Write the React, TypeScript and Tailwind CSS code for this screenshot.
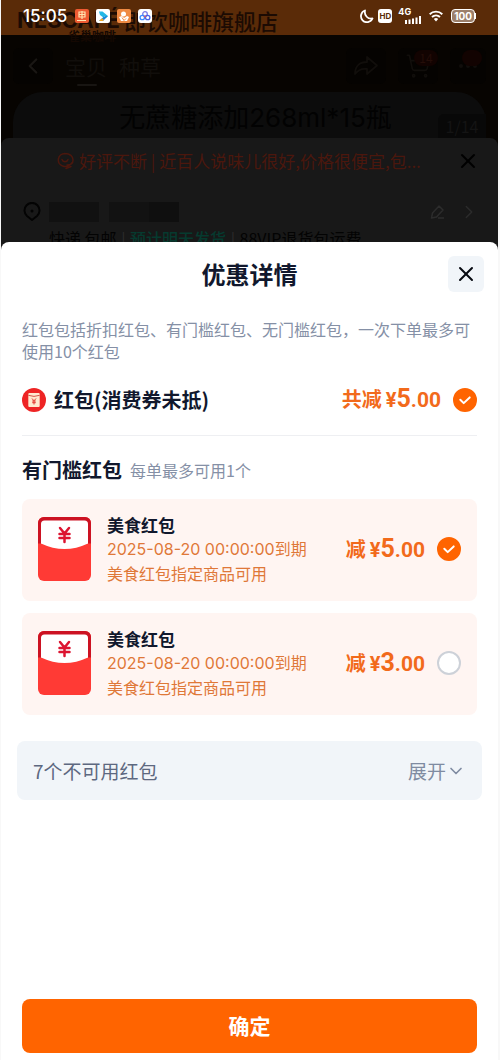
import { useState } from 'react'
import { ChevronDown, ChevronLeft, ChevronRight, Ellipsis, ShoppingCart, X } from 'lucide-react'

type Coupon = {
  id: string
  title: string
  expires: string
  scope: string
  amount: number
}

const coupons: Coupon[] = [
  { id: 'food-5', title: '美食红包', expires: '2025-08-20 00:00:00', scope: '美食红包指定商品可用', amount: 5 },
  { id: 'food-3', title: '美食红包', expires: '2025-08-20 00:00:00', scope: '美食红包指定商品可用', amount: 3 }
]

export default function App() {
  const [selected, setSelected] = useState('food-5')
  const [applied, setApplied] = useState(true)

  const total = coupons.find(c => c.id === selected)?.amount ?? 0

  return (
    <div className="min-h-screen flex flex-col bg-[#f8f8f8] pl-px pr-0.5 font-['Noto_Sans_CJK_SC',sans-serif]">
      <div className="flex-1 flex flex-col bg-[#181818]">
        <ShopPage />

        {/* Coupon sheet */}
        <main className="flex-1 flex flex-col bg-white rounded-t-lg">
          <header className="grid grid-cols-[1fr_auto_1fr] items-center px-3.5 pt-3.5">
            <h1 className="col-start-2 text-[24px] leading-9 font-bold text-[#11182d]">优惠详情</h1>
            <button aria-label="关闭" className="justify-self-end w-9 h-9 rounded-md bg-[#f1f5f9] flex items-center justify-center text-[#080b12]">
              <X size={24} strokeWidth={2} />
            </button>
          </header>

          <p className="px-[21px] pt-[26px] text-[16px] leading-[22px] text-[#8590a6]">
            红包包括折扣红包、有门槛红包、无门槛红包，一次下单最多可使用10个红包
          </p>

          <label className="mx-[21px] pt-[21px] pb-[19px] flex items-center border-b border-[#eeeff2]">
            <BadgeIcon />
            <span className="ml-2 text-[20px] leading-8 font-bold text-[#11182d]">红包(消费券未抵)</span>
            <Price prefix="共减" amount={total} />
            <Tick type="checkbox" checked={applied} onChange={() => setApplied(!applied)} />
          </label>

          <div className="px-[21px] pt-[19px] flex items-center gap-2">
            <h2 className="text-[20px] leading-[30px] font-bold text-[#11182d]">有门槛红包</h2>
            <span className="text-[16px] leading-6 text-[#8590a6]">每单最多可用1个</span>
          </div>

          <div className="px-[21px] pt-3.5 space-y-3">
            {coupons.map(coupon => (
              <label key={coupon.id} className="flex items-center rounded-lg bg-[#fff5f2] px-4 pt-3.5 pb-4">
                <EnvelopeIcon />
                <span className="ml-4 flex flex-col text-[16px] leading-6 text-[#df7838]">
                  <span className="text-[17px] font-bold text-[#11182d]">{coupon.title}</span>
                  <span className="font-['Inter','Noto_Sans_CJK_SC',sans-serif] whitespace-nowrap">{coupon.expires}到期</span>
                  <span>{coupon.scope}</span>
                </span>
                <Price prefix="减" amount={coupon.amount} />
                <Tick type="radio" checked={selected === coupon.id} onChange={() => setSelected(coupon.id)} />
              </label>
            ))}
          </div>

          <button className="mx-4 mt-[26px] px-4 pt-4 pb-[15px] rounded-lg bg-[#f1f5f9] flex items-center justify-between text-[19px] leading-7">
            <span className="text-[#5d6880]">7个不可用红包</span>
            <span className="flex items-center text-[#7f8ba1]">
              展开
              <ChevronDown size={20} strokeWidth={2} />
            </span>
          </button>

          <div className="mt-auto px-[21px] pb-[7px]">
            <button className="w-full rounded-lg bg-[#ff6400] pt-[10px] pb-3 text-[21px] leading-8 font-bold text-white">确定</button>
          </div>
        </main>
      </div>
    </div>
  )
}

function Price({ prefix, amount }: { prefix: string; amount: number }) {
  const [whole, cents] = amount.toFixed(2).split('.')
  return (
    <span className="ml-auto mr-3 flex items-baseline font-['Roboto','Noto_Sans_CJK_SC',sans-serif] font-bold text-[20px] leading-8 text-[#f26a1b] whitespace-nowrap">
      {prefix}
      <span className="ml-1">¥</span>
      <span className="text-[25px]">{whole}</span>
      <span className="text-[21px]">.{cents}</span>
    </span>
  )
}

function Tick({ type, checked, onChange }: { type: 'checkbox' | 'radio'; checked: boolean; onChange: () => void }) {
  return (
    <span className="relative w-6 h-6 shrink-0">
      <input
        type={type}
        name={type === 'radio' ? 'coupon' : 'apply'}
        checked={checked}
        onChange={onChange}
        className="block appearance-none w-6 h-6 rounded-full border-2 border-[#cdd1d8] bg-white checked:border-[#ff6400] checked:bg-[#ff6400]"
      />
      {checked && (
        <svg viewBox="0 0 24 24" className="absolute inset-0 pointer-events-none" fill="none" stroke="#fff" strokeWidth="2" strokeLinecap="round" strokeLinejoin="round">
          <path d="M7.3 11.8l3.4 3.3 6-5.7" />
        </svg>
      )}
    </span>
  )
}

function BadgeIcon() {
  return (
    <svg viewBox="0 0 24 24" className="w-6 h-6 shrink-0">
      <circle cx="12" cy="12" r="12" fill="#ee2424" />
      <rect x="6.3" y="5" width="11.4" height="14" rx="1" fill="#ffe9cf" />
      <path d="M6.3 7.3q5.7 2.2 11.4 0" fill="none" stroke="#d5554a" strokeWidth="1" />
      <path d="M10 10.5l2 2.3 2-2.3M12 12.8v3.7M10.2 13h3.6M10.2 14.7h3.6" fill="none" stroke="#e23b32" strokeWidth="1" />
    </svg>
  )
}

function EnvelopeIcon() {
  return (
    <svg viewBox="0 0 53 64" className="w-[53px] h-16 shrink-0">
      <rect width="53" height="64" rx="6" fill="#ff3a35" />
      <path d="M0 27V6a6 6 0 0 1 6-6h41a6 6 0 0 1 6 6v21z" fill="#cc1222" />
      <path d="M3 27V7a3.5 3.5 0 0 1 3.5-3.5h40A3.5 3.5 0 0 1 50 7v20z" fill="#fff" />
      <path d="M0 26.5h3q23.5 11 47 0h3v8H0z" fill="#ff3a35" />
      <path d="M3 26.5q23.5 11 47 0z" fill="#fff" />
      <path d="M22 11l4.5 5.5L31 11M26.5 16.5v8.5M21.5 17h10M21.5 21h10" fill="none" stroke="#dc1430" strokeWidth="2.5" strokeLinecap="round" />
    </svg>
  )
}

/* Dimmed shop page behind the sheet */
function ShopPage() {
  return (
    <div className="h-[242px] overflow-hidden bg-[#070401]">
      <div className="relative h-[35px] bg-[#5a2b08]">
        <div className="pl-4 flex items-center gap-1 text-[#1c0b03] whitespace-nowrap">
          <span className="font-['Inter',sans-serif] text-[22px] leading-10 font-bold">NESCAFÉ</span>
          <span className="text-[22px] leading-10 font-medium">即饮咖啡旗舰店</span>
        </div>
        <span className="absolute left-[67px] top-[30px] text-[12px] leading-3 font-bold text-[#140802]">雀巢咖啡</span>
        <StatusBar />
      </div>

      <nav className="h-[57px] px-3 pt-1 flex items-center gap-3 text-[#110e0b]">
        <button aria-label="返回" className="w-10 h-9 rounded-md bg-[#050301] flex items-center justify-center text-[#1a1714]">
          <ChevronLeft size={26} strokeWidth={2} />
        </button>
        <a href="#item" className="relative text-[21px] leading-8">
          宝贝
          <span className="absolute left-3 -bottom-1 w-5 h-0.5 rounded bg-[#181512]" />
        </a>
        <a href="#notes" className="text-[21px] leading-8">种草</a>
        <div className="ml-auto flex gap-3">
          <button aria-label="分享" className="w-10 h-9 rounded-md bg-[#050301] flex items-center justify-center">
            <svg viewBox="0 0 26 24" className="w-[26px] h-6" fill="none" stroke="currentColor" strokeWidth="1.8" strokeLinejoin="round">
              <path d="M14 3l10 8.5-10 8.500v-5C8 14 5 16 2 20c0-8 5-12 12-12z" />
            </svg>
          </button>
          <button aria-label="购物车" className="relative w-10 h-9 rounded-md bg-[#050301] flex items-center justify-center">
            <ShoppingCart size={26} strokeWidth={1.5} />
            <span className="absolute left-4 top-0.5 w-6 h-4 rounded-full bg-[#120301] text-[12px] leading-4 text-center text-[#240d08]">14</span>
          </button>
          <button aria-label="更多" className="relative w-9 h-9 rounded-md bg-[#050301] flex items-center justify-center">
            <Ellipsis size={24} />
            <span className="absolute left-3 top-0.5 w-5 h-4 rounded-full bg-[#120301]" />
          </button>
        </div>
      </nav>

      <div className="relative h-[46px] mx-3 pl-3 rounded-t-[30px] bg-[#0c0c0c] text-center text-[#020202]">
        <span className="font-['Inter','Noto_Sans_CJK_SC',sans-serif] text-[26px] leading-[52px]">无蔗糖添加268ml*15瓶</span>
        <span className="absolute right-0 bottom-0 w-12 rounded-tl-md bg-[#080808] text-[16px] leading-6 text-[#141414]">1/14</span>
      </div>

      <div className="rounded-t-lg bg-[#181818] pl-[22px] pr-[18px]">
        <div className="h-[46px] pl-[34px] flex items-center text-[17px] text-[#4b170d]">
          <svg viewBox="0 0 18 18" className="w-[18px] h-[18px] shrink-0 mr-1" fill="none" stroke="currentColor" strokeWidth="1.5" strokeLinecap="round">
            <path d="M8 1.5a7 6.5 0 1 0 6.5 9.5M8 1.5c5 0 8 3 8 6.5s-3 5-6 5M5 7.500c1 3 5 3 6 0M9 16.500l5-2" />
          </svg>
          <span className="flex-1 whitespace-nowrap">好评不断 | 近百人说味儿很好,价格很便宜,包...</span>
          <button aria-label="关闭评价" className="ml-6 text-black">
            <X size={24} strokeWidth={2} />
          </button>
        </div>
        <div className="mt-4 h-6 flex items-center text-[#030303]">
          <svg viewBox="0 0 18 20" className="w-[18px] h-5 shrink-0" fill="none" stroke="currentColor" strokeWidth="2" strokeLinejoin="round">
            <path d="M9 18l-5-4a7.5 7.5 0 1 1 10 0z" />
            <circle cx="9" cy="9" r="1.5" fill="currentColor" stroke="none" />
          </svg>
          <span className="ml-2 w-[50px] h-5 bg-[#111]" />
          <span className="ml-2.5 w-10 h-5 bg-[#121212]" />
          <span className="w-[30px] h-5 bg-[#0f0f0f]" />
          <svg viewBox="0 0 16 16" className="ml-auto w-4 h-4 text-[#2c2c2c]" fill="none" stroke="currentColor" strokeWidth="1.5" strokeLinejoin="round">
            <path d="M1.5 14l1-5L9 2l4 4-6.5 7-5 1zM8 14h6" />
          </svg>
          <ChevronRight className="ml-3 text-[#2c2c2c]" size={22} strokeWidth={1.5} />
        </div>
        <p className="pl-[26px] mt-0.5 text-[16px] leading-6 text-[#030303] whitespace-nowrap">
          快递 包邮<span className="mx-px text-[#2c2c2c]"> | </span>
          <span className="font-medium text-[#063a2f]">预计明天发货</span>
          <span className="mx-px text-[#2c2c2c]"> | </span>88VIP退货包运费
        </p>
      </div>
    </div>
  )
}

function StatusBar() {
  return (
    <div className="absolute inset-x-0 top-0 h-8 pl-[22px] pr-[22px] flex items-center text-white font-['Inter',sans-serif]">
      <span className="text-[17px] leading-6 font-medium">15:05</span>
      <div className="ml-2 flex gap-[7px]">
        <svg viewBox="0 0 14 14" className="w-3.5 h-3.5">
          <rect width="14" height="14" rx="2" fill="#ee5a32" />
          <path d="M4 3h6v5H4zM4 5.5h6M7 2v8M2 11.5h9" fill="none" stroke="#ffe3b0" strokeWidth="1.2" />
        </svg>
        <svg viewBox="0 0 14 14" className="w-3.5 h-3.5">
          <rect width="14" height="14" rx="2" fill="#fff" />
          <path d="M3 2.5h3.5l5.5 4.5-2 1.8z" fill="#22b8e6" />
          <path d="M3 2.5l5 2.5v4L4 6z" fill="#22b8e6" />
          <path d="M12 7l-5 5H3l5-4.5z" fill="#1687d9" />
          <path d="M3 12l3-2.8 2 1.8-1.5 1z" fill="#f5a623" />
        </svg>
        <svg viewBox="0 0 14 14" className="w-3.5 h-3.5">
          <rect width="14" height="14" rx="2" fill="#ef8a43" />
          <circle cx="6.5" cy="5" r="2.5" fill="#fff" />
          <path d="M2 8l3-1 2 2 3-2 2 1-2 4H4z" fill="#fff" />
          <path d="M5 8.5l2 3 2-2" fill="none" stroke="#ef8a43" />
        </svg>
        <svg viewBox="0 0 14 14" className="w-3.5 h-3.5" fill="none" strokeWidth="1.3">
          <rect width="14" height="14" rx="3" fill="#fff" />
          <circle cx="7" cy="5" r="2.3" stroke="#7b7be8" />
          <circle cx="4.3" cy="8.5" r="2.2" stroke="#3c8cff" />
          <circle cx="9.7" cy="8.5" r="2.2" stroke="#4a65e8" />
          <circle cx="7" cy="7.500" r="1" fill="#e65365" />
        </svg>
      </div>
      <div className="ml-auto flex items-center">
        <svg viewBox="0 0 14 14" className="w-3.5 h-3.5" fill="none" stroke="currentColor" strokeWidth="1.8" strokeLinejoin="round">
          <path d="M5 1.5a6 6 0 1 0 7.5 8C8 10.500 4 6.500 5 1.500z" />
        </svg>
        <span className="ml-1 w-3.5 h-3.5 rounded-[3px] bg-white text-[8px] leading-[14px] font-bold text-center text-[#5a2b08]">HD</span>
        <span className="ml-1.5 self-start text-[9px] leading-[8px] font-bold">4G</span>
        <svg viewBox="0 0 16 8" className="-ml-1.5 mt-2 w-4 h-2" fill="currentColor">
          <path d="M0 4h2v4H0zM3.5 3.500h2v4.500h-2zM7 2.500h2V8H7zM10.500 1.500h2V8h-2zM14 0h2v8h-2z" />
        </svg>
        <svg viewBox="0 0 14 12" className="ml-2 w-3.5 h-3" fill="none" stroke="currentColor" strokeWidth="1.9">
          <path d="M.7 4.2a9 9 0 0 1 12.6 0M3 7a6 6 0 0 1 8 0" />
          <path d="M4.800 9a3.500 3.500 0 0 1 4.400 0L7 11.500z" fill="currentColor" stroke="none" />
        </svg>
        <span className="ml-2 px-0.5 h-3.5 rounded border border-white bg-white/40 text-[10px] leading-3 font-bold">100</span>
        <span className="w-px h-1.5 bg-white" />
      </div>
    </div>
  )
}
